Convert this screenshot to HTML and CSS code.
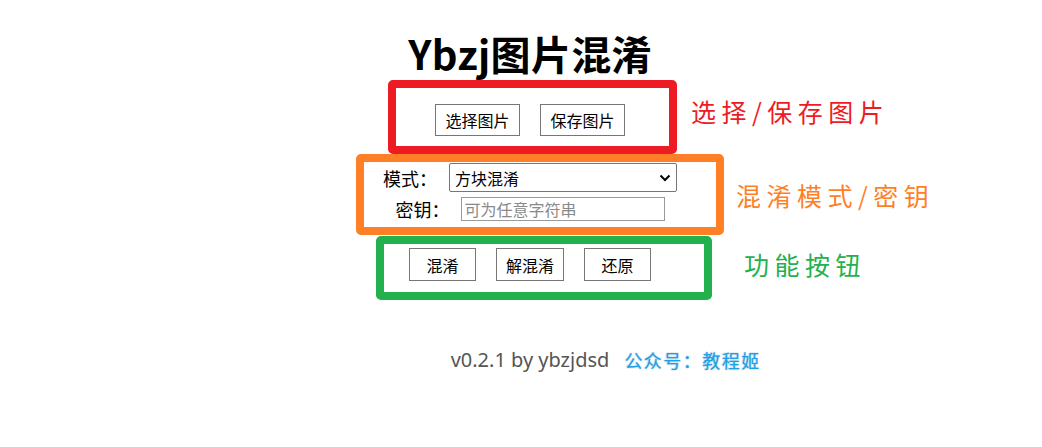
FILE: index.html
```html
<!DOCTYPE html>
<html lang="zh-CN">
<head>
<meta charset="utf-8">
<title>Ybzj图片混淆</title>
<link rel="stylesheet" href="styles.css">
</head>
<body>
<div class="page">
  <h1 class="title">Ybzj图片混淆</h1>
  <div class="row row-file">
    <button class="btn btn-wide">选择图片</button>
    <button class="btn btn-wide">保存图片</button>
  </div>
  <div class="form">
    <div class="field">
      <label class="label">模式：</label>
      <div class="select-wrap">
        <select class="select">
          <option>方块混淆</option>
        </select>
        <svg class="chev" width="12" height="8" viewBox="0 0 12 8"><path d="M1.5 1.5 L6 6 L10.5 1.5" fill="none" stroke="#000" stroke-width="2"/></svg>
      </div>
    </div>
    <div class="field field-key">
      <label class="label">密钥：</label>
      <input class="input" type="text" placeholder="可为任意字符串">
    </div>
  </div>
  <div class="row row-actions">
    <button class="btn">混淆</button>
    <button class="btn">解混淆</button>
    <button class="btn">还原</button>
  </div>
  <div class="footer">
    <span class="version">v0.2.1 by ybzjdsd<a class="wechat">公众号：教程姬</a></span>
  </div>

  <div class="notes">
    <div class="box box-red"></div>
    <div class="box box-orange"></div>
    <div class="box box-green"></div>
    <div class="note note-red">选择/保存图片</div>
    <div class="note note-orange">混淆模式/密钥</div>
    <div class="note note-green">功能按钮</div>
  </div>
</div>
</body>
</html>
```
FILE: styles.css
```css
html, body {
  margin: 0;
  padding: 0;
  background: #fff;
}
body {
  font-family: "Noto Sans CJK SC", "Noto Sans", sans-serif;
  color: #000;
  width: 1042px;
  height: 447px;
  overflow: hidden;
}
.page {
  position: relative;
  margin-left: 18px;
  width: 1024px;
  height: 447px;
  display: flex;
  flex-direction: column;
  align-items: center;
}
.title {
  margin: 30px 0 0;
  font-size: 40px;
  line-height: 46px;
  height: 46px;
  font-weight: 700;
  letter-spacing: 0.3px;
}
.row {
  display: flex;
  justify-content: center;
  gap: 20px;
}
.row-file {
  margin-top: 28px;
}
.btn {
  font-family: "Noto Sans CJK SC", sans-serif;
  font-size: 16px;
  background: #fff;
  color: #000;
  border: 1px solid #767676;
  border-radius: 0;
  height: 33px;
  min-width: 67px;
  padding: 0 9px;
  line-height: 1;
}
.btn-wide {
  height: 32px;
  width: 85px;
}
.form {
  margin-top: 27px;
  display: flex;
  flex-direction: column;
  align-items: center;
  gap: 5px;
}
.field {
  display: flex;
  align-items: center;
  gap: 12px;
}
.field-key {
  gap: 11px;
}
.label {
  font-size: 18px;
  width: 54px;
  line-height: 24px;
  white-space: nowrap;
}
.select-wrap {
  position: relative;
  width: 228px;
  height: 29px;
}
.select {
  appearance: none;
  -webkit-appearance: none;
  width: 228px;
  height: 29px;
  border: 1px solid #767676;
  border-radius: 2px;
  background: #fff;
  font-family: "Noto Sans CJK SC", sans-serif;
  font-size: 16px;
  padding: 0 0 0 5px;
  color: #000;
  margin: 0;
}
.chev {
  position: absolute;
  right: 6px;
  top: 11px;
  pointer-events: none;
}
.input {
  width: 204px;
  height: 24px;
  box-sizing: border-box;
  border: 1px solid #9a9a9a;
  border-radius: 0;
  font-family: "Noto Sans CJK SC", sans-serif;
  font-size: 16px;
  padding: 0 3px;
  margin: 0;
}
.input::placeholder {
  color: #8a8a8a;
}
.row-actions {
  margin-top: 27px;
}
.footer {
  margin-top: 67px;
  display: flex;
  justify-content: center;
}
.version {
  position: relative;
  font-family: "Noto Sans", "Noto Sans CJK SC", sans-serif;
  font-size: 20px;
  line-height: 24px;
  color: #555;
}
.wechat {
  position: absolute;
  left: 100%;
  top: 0;
  margin-left: 15px;
  white-space: nowrap;
  font-family: "Noto Sans CJK SC", sans-serif;
  font-size: 18px;
  letter-spacing: 1.5px;
  color: #1e9fe8;
  text-shadow: 0 0 2px #a8cfe6, 0 0 1px #9bb;
  font-weight: 400;
}

/* annotation overlay */
.notes {
  position: absolute;
  left: -18px;
  top: 0;
  width: 1042px;
  height: 447px;
  pointer-events: none;
}
.box {
  position: absolute;
  box-sizing: border-box;
  border: 8px solid;
  border-radius: 5px;
}
.box-red {
  left: 388px;
  top: 80px;
  width: 289px;
  height: 74px;
  border-color: #ed1c24;
}
.box-orange {
  left: 356px;
  top: 154px;
  width: 368px;
  height: 81px;
  border-color: #ff7f27;
}
.box-green {
  left: 376px;
  top: 236px;
  width: 336px;
  height: 64px;
  border-color: #22b14c;
}
.note {
  position: absolute;
  font-family: "Noto Sans CJK SC", sans-serif;
  font-size: 25px;
  line-height: 30px;
  letter-spacing: 5.5px;
  white-space: nowrap;
}
.note-red {
  left: 691px;
  top: 96px;
  color: #ed1c24;
}
.note-orange {
  left: 736px;
  top: 180px;
  color: #ff7f27;
}
.note-green {
  left: 744px;
  top: 249px;
  color: #22b14c;
}
```
